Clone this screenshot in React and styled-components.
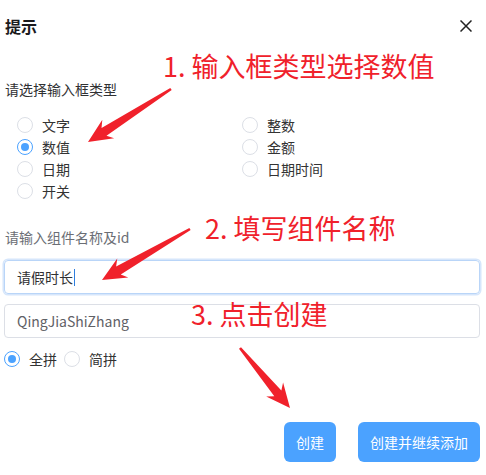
import React from 'react';
import styled, { createGlobalStyle } from 'styled-components';

const primary = '#4ba2ff';
const red = '#f0212b';
const fontStack = '"Noto Sans CJK SC", "Noto Sans", sans-serif';

const GlobalStyle = createGlobalStyle`
  html, body {
    margin: 0;
    padding: 0;
    background: #fff;
  }
  * {
    box-sizing: border-box;
  }
`;

const Page = styled.div`
  position: relative;
  width: 486px;
  height: 475px;
  padding: 0 6px 0 4px;
  background: #fff;
  font-family: ${fontStack};
  color: #303133;
  overflow: hidden;
`;

const Header = styled.div`
  display: flex;
  align-items: center;
  justify-content: space-between;
  height: 52px;
  padding: 0 7px 0 1px;
`;

const Title = styled.h2`
  margin: 0;
  font-size: 16px;
  font-weight: 700;
  line-height: 22px;
  color: #1b1b1d;
`;

const CloseButton = styled.button`
  display: flex;
  align-items: center;
  justify-content: center;
  width: 14px;
  height: 14px;
  padding: 0;
  border: none;
  background: none;
  color: #222;
`;

const Label = styled.div`
  margin-top: ${props => props.$top}px;
  padding-left: 1px;
  font-size: 14px;
  line-height: 20px;
  color: ${props => (props.$muted ? '#6b6e75' : '#303133')};
`;

const RadioGrid = styled.div`
  display: grid;
  grid-template-columns: 225px 1fr;
  grid-auto-rows: 22px;
  margin-top: 15px;
  padding-left: 13px;
`;

const RadioItem = styled.label`
  display: flex;
  align-items: center;
  gap: 9px;
  font-size: 14px;
  line-height: 22px;
  color: #333;
`;

const Circle = styled.span`
  position: relative;
  flex: none;
  width: 16px;
  height: 16px;
  border-radius: 50%;
  border: 1px solid ${props => (props.$checked ? primary : '#dcdfe6')};
  background: #fff;

  &::after {
    content: '';
    display: ${props => (props.$checked ? 'block' : 'none')};
    position: absolute;
    top: 3px;
    left: 3px;
    width: 8px;
    height: 8px;
    border-radius: 50%;
    background: ${primary};
  }
`;

const Field = styled.div`
  display: flex;
  align-items: center;
  height: 34px;
  margin-top: ${props => props.$top}px;
  padding: 0 12px;
  border-radius: 4px;
  border: 1px solid ${props => (props.$focused ? '#b9d5f8' : '#dcdfe6')};
  box-shadow: ${props => (props.$focused ? '0 0 0 1.5px #d6e6fb' : 'none')};
  font-size: 14px;
  color: ${props => (props.$focused ? '#303133' : '#5f6166')};
`;

const Caret = styled.span`
  display: inline-block;
  width: 1px;
  height: 17px;
  margin-left: 1px;
  background: #2f7fe0;
`;

const PinyinRow = styled.div`
  display: flex;
  align-items: center;
  gap: 7px;
  height: 22px;
  margin-top: 10px;
`;

const Footer = styled.div`
  display: flex;
  justify-content: flex-end;
  gap: 22px;
  margin-top: 52px;
`;

const Button = styled.button`
  height: 40px;
  padding: 0 12px;
  border: none;
  border-radius: 6px;
  background: ${primary};
  color: #fff;
  font-family: ${fontStack};
  font-size: 14px;
`;

const Note = styled.div`
  position: absolute;
  left: ${props => props.$left}px;
  top: ${props => props.$top}px;
  font-size: 27px;
  line-height: 27px;
  color: ${red};
  white-space: nowrap;
`;

const Overlay = styled.svg`
  position: absolute;
  inset: 0;
  pointer-events: none;
`;

function Arrow({ x1, y1, x2, y2 }) {
  const L = Math.hypot(x2 - x1, y2 - y1);
  const angle = (Math.atan2(y2 - y1, x2 - x1) * 180) / Math.PI;
  const pts = [
    [0, -1.3],
    [L - 19, -4.6],
    [L - 24, -11],
    [L, 0],
    [L - 24, 11],
    [L - 19, 4.6],
    [0, 1.3],
  ];
  return (
    <g transform={`translate(${x1} ${y1}) rotate(${angle})`}>
      <polygon points={pts.map(p => p.join(',')).join(' ')} fill={red} />
    </g>
  );
}

const types = [
  { label: '文字' },
  { label: '整数' },
  { label: '数值', checked: true },
  { label: '金额' },
  { label: '日期' },
  { label: '日期时间' },
  { label: '开关' },
];

function Radio({ label, checked }) {
  return (
    <RadioItem>
      <Circle $checked={checked} />
      {label}
    </RadioItem>
  );
}

export default function App() {
  return (
    <Page>
      <GlobalStyle />
      <Header>
        <Title>提示</Title>
        <CloseButton aria-label="close">
          <svg width="12" height="12" viewBox="0 0 12 12">
            <path d="M0.5 0.5 L11.5 11.5 M11.5 0.5 L0.5 11.5" stroke="currentColor" strokeWidth="1.5" />
          </svg>
        </CloseButton>
      </Header>

      <Label $top={27}>请选择输入框类型</Label>
      <RadioGrid>
        {types.map(t => (
          <Radio key={t.label} label={t.label} checked={t.checked} />
        ))}
      </RadioGrid>

      <Label $top={25} $muted>请输入组件名称及id</Label>
      <Field $top={13} $focused>
        请假时长
        <Caret />
      </Field>
      <Field $top={10}>QingJiaShiZhang</Field>

      <PinyinRow>
        <Radio label="全拼" checked />
        <Radio label="简拼" />
      </PinyinRow>

      <Footer>
        <Button>创建</Button>
        <Button>创建并继续添加</Button>
      </Footer>

      <Note $left={163} $top={52}>1. 输入框类型选择数值</Note>
      <Note $left={205} $top={214}>2. 填写组件名称</Note>
      <Note $left={191} $top={300}>3. 点击创建</Note>

      <Overlay width="486" height="475" viewBox="0 0 486 475">
        <Arrow x1={171} y1={89} x2={88} y2={142} />
        <Arrow x1={190} y1={229} x2={102} y2={280} />
        <Arrow x1={240} y1={348} x2={290} y2={408} />
      </Overlay>
    </Page>
  );
}
